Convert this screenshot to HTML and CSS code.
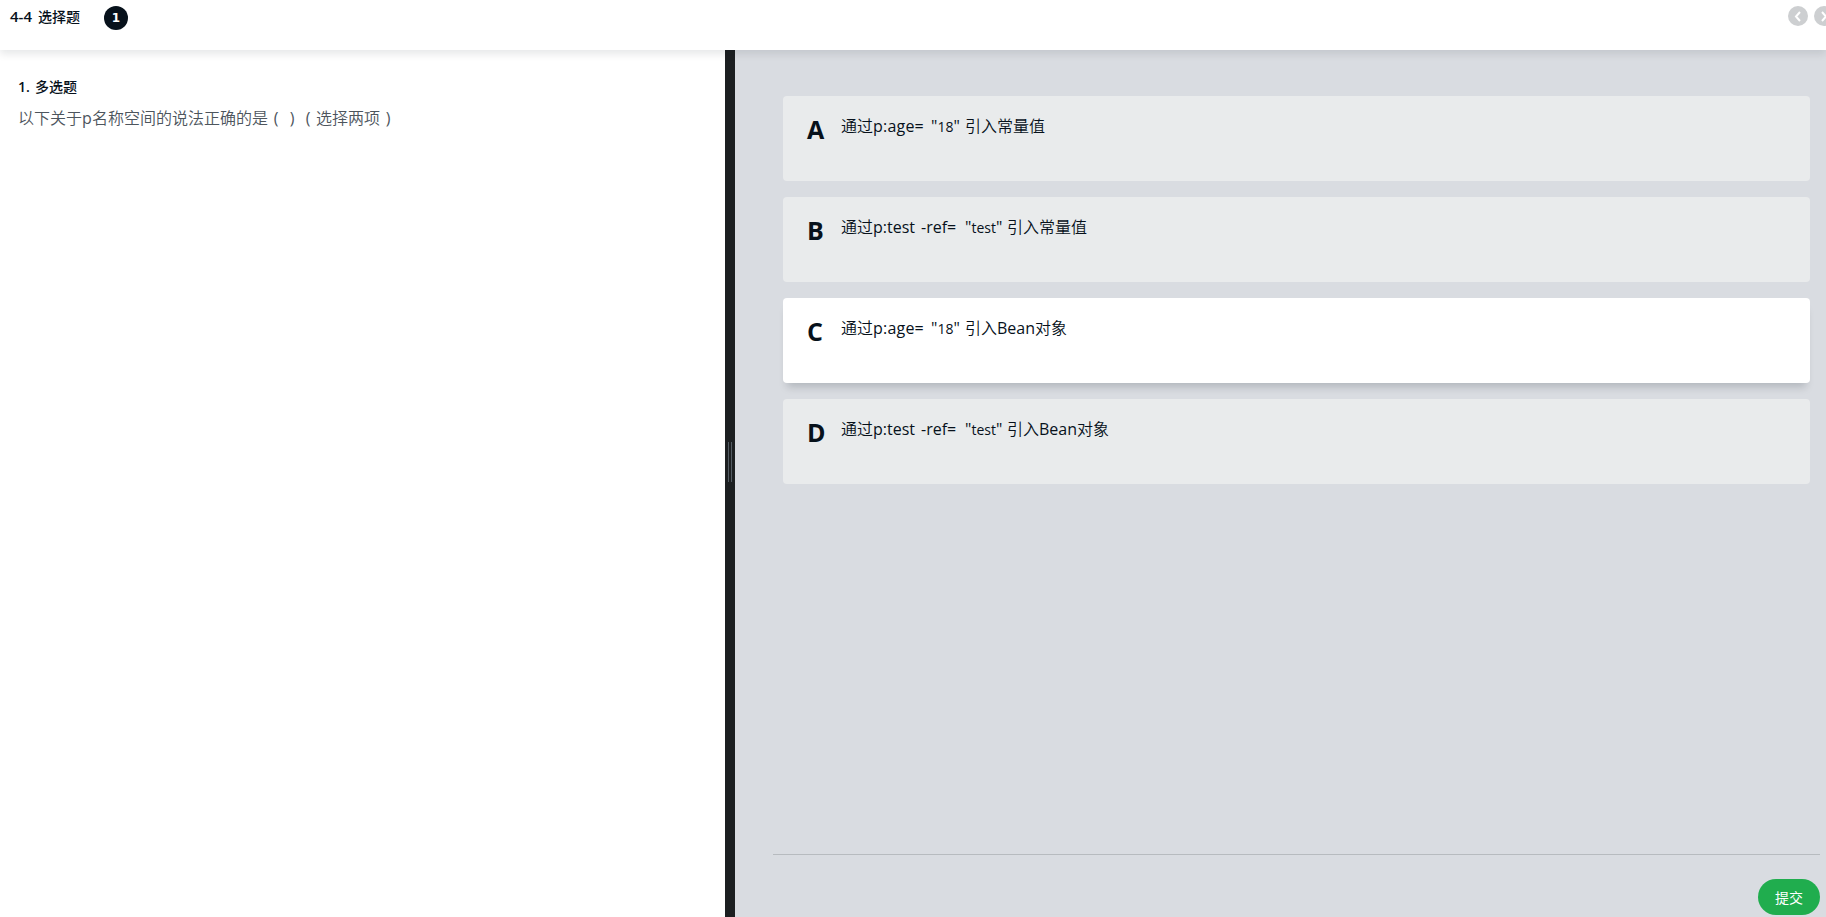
FILE: index.html
```
<!DOCTYPE html>
<html lang="zh-CN">
<head>
<meta charset="utf-8">
<title>4-4 选择题</title>
<link rel="stylesheet" href="styles.css">
</head>
<body>
<header class="topbar">
  <h1 class="title"><span class="index">4-4</span>选择题</h1>
  <span class="step">1</span>
  <nav class="pager">
    <svg class="arrow" viewBox="0 0 20 20"><circle cx="10" cy="10" r="10"/><path d="M12 6 8 10.5l4 4.5"/></svg>
    <svg class="arrow" viewBox="0 0 20 20"><circle cx="10" cy="10" r="10"/><path d="M8 6l4 4.5L8 15"/></svg>
  </nav>
</header>
<main class="panes">
  <section class="question">
    <h2 class="kind"><span class="order">1.</span>多选题</h2>
    <p class="stem">以下关于<span class="lat">p</span>名称空间的说法正确的是<span class="paren">(</span><span class="paren">)</span><span class="paren">(</span>选择两项<span class="paren">)</span></p>
  </section>
  <div class="divider"><span class="grip"></span></div>
  <section class="answers">
    <ul class="options">
      <li class="option"><b class="letter">A</b><p class="text">通过<span class="age">p:age=</span><span class="num">"<small>18</small>"</span>引入常量值</p></li>
      <li class="option"><b class="letter">B</b><p class="text">通过<span class="test">p:test</span><span class="ref">-ref=</span><span class="str">"<small>test</small>"</span>引入常量值</p></li>
      <li class="option selected"><b class="letter">C</b><p class="text">通过<span class="age">p:age=</span><span class="num">"<small>18</small>"</span>引入<span class="bean">Bean</span>对象</p></li>
      <li class="option"><b class="letter">D</b><p class="text">通过<span class="test">p:test</span><span class="ref">-ref=</span><span class="str">"<small>test</small>"</span>引入<span class="bean">Bean</span>对象</p></li>
    </ul>
    <footer class="actions"><button class="submit">提交</button></footer>
  </section>
</main>
</body>
</html>
```
FILE: styles.css
```
* { box-sizing: border-box; margin: 0; padding: 0; }
html { height: 100%; overflow: hidden; }
body {
  height: 100%;
  overflow: hidden;
  display: flex;
  flex-direction: column;
  background: #fff;
  color: #07111b;
  font-family: "Open Sans", "Noto Sans CJK SC", sans-serif;
}
.topbar {
  position: relative;
  z-index: 1;
  flex: none;
  display: flex;
  align-items: flex-start;
  height: 50px;
  padding: 6px 0 0 10px;
  background: #fff;
  box-shadow: 0 4px 8px rgba(7, 17, 27, .1);
}
.title { width: 94px; font-size: 14px; font-weight: 500; line-height: 22px; white-space: nowrap; }
.index, .order { display: inline-block; font-weight: 600; }
.index { width: 28px; font-size: 15px; line-height: 20px; }
.order { width: 17px; }
.step {
  width: 24px;
  height: 24px;
  border-radius: 50%;
  background: #07111b;
  color: #fff;
  font: bold 12px/24px "DejaVu Sans", sans-serif;
  text-align: center;
}
.pager { display: flex; gap: 6px; margin-left: auto; margin-right: -8px; }
.arrow { width: 20px; height: 20px; fill: #cdcfd1; flex: none; }
.arrow path { fill: none; stroke: #fff; stroke-width: 2; }
.panes { flex: 1; display: flex; min-height: 0; }
.question { width: 725px; padding: 26px 18px; }
.kind { font-size: 14px; font-weight: 500; line-height: 22px; }
.stem { margin-top: 8px; font-size: 16px; font-weight: 350; line-height: 24px; color: #4d555d; white-space: nowrap; }
.lat, .paren { display: inline-block; font-weight: 400; }
.lat { width: 10px; }
.paren { width: 16px; text-align: center; }
.divider { width: 10px; background: #1c1f21; display: flex; justify-content: center; padding-top: 392px; }
.grip { width: 4px; height: 40px; border: solid #545c63; border-width: 0 1px; }
.answers { flex: 1; min-width: 0; display: flex; flex-direction: column; padding: 46px 6px 2px 38px; background: #d9dce1; }
.options { list-style: none; display: flex; flex-direction: column; gap: 16px; padding: 0 10px; }
.option { display: flex; height: 85px; padding: 18px 24px; border-radius: 4px; background: #e9ebec; }
.selected { background: #fff; box-shadow: 0 8px 8px -4px rgba(7, 17, 27, .18); }
.letter { width: 34px; margin-top: -1px; font-size: 25px; line-height: 32px; }
.text { font-size: 16px; font-weight: 350; line-height: 24px; white-space: nowrap; }
.text span { display: inline-block; font-weight: 400; }
.text small { font-size: 14px; }
.age { width: 58px; letter-spacing: .2px; }
.num { width: 34px; }
.test { width: 48px; }
.ref { width: 44px; }
.str { width: 42px; }
.bean { width: 38px; }
.actions { margin-top: auto; display: flex; justify-content: flex-end; border-top: 1px solid #b7bbbf; padding-top: 24px; }
.submit {
  width: 62px;
  height: 36px;
  border: 0;
  border-radius: 18px;
  background: #20ad4e;
  color: #fff;
  font: 14px/36px "Noto Sans CJK SC", sans-serif;
}
```
